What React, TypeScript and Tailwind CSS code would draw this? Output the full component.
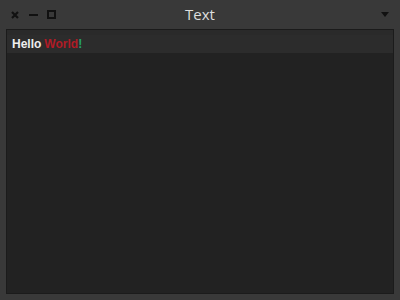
export default function App() {
  return (
    <div className="w-[400px] h-[300px] flex flex-col bg-[#393939] font-['Open_Sans',sans-serif] overflow-hidden">
      {/* Title bar */}
      <div className="h-[29px] flex items-center px-[10px] relative">
        <div className="flex items-center text-[#111]">
          <svg width="8" height="8" viewBox="0 0 8 8" className="ml-[1px]">
            <path d="M1 1L7 7M7 1L1 7" stroke="currentColor" strokeWidth="2.2" />
          </svg>
          <svg width="9" height="8" viewBox="0 0 9 8" className="ml-[10px]">
            <rect x="0" y="3" width="9" height="2" fill="currentColor" />
          </svg>
          <svg width="9" height="9" viewBox="0 0 9 9" className="ml-[9px]">
            <rect x="1" y="1" width="7" height="7" fill="none" stroke="currentColor" strokeWidth="2" />
          </svg>
        </div>
        <div className="absolute left-0 right-0 text-center text-[15px] text-[#dedede]">Text</div>
        <div className="ml-auto mr-[1px] w-0 h-0 border-l-[4px] border-r-[4px] border-t-[5px] border-l-transparent border-r-transparent border-t-[#111]" />
      </div>

      {/* Window body */}
      <div className="flex-1 px-[6px] pb-[6px] flex">
        <div className="flex-1 border border-[#1b1b1b] bg-[#222] flex flex-col">
          <div className="h-[5px] bg-[#2a2a2a]" />
          <div className="h-[18px] bg-[#2c2c2c] flex items-center pl-[5px] text-[12px] font-bold leading-none font-['Liberation_Sans',sans-serif]">
            <span className="text-[#eeeeee]">Hello</span>
            <span className="ml-[3px] text-[#b01b26]">World</span>
            <span className="text-[#26a269]">!</span>
          </div>
        </div>
      </div>
    </div>
  );
}
